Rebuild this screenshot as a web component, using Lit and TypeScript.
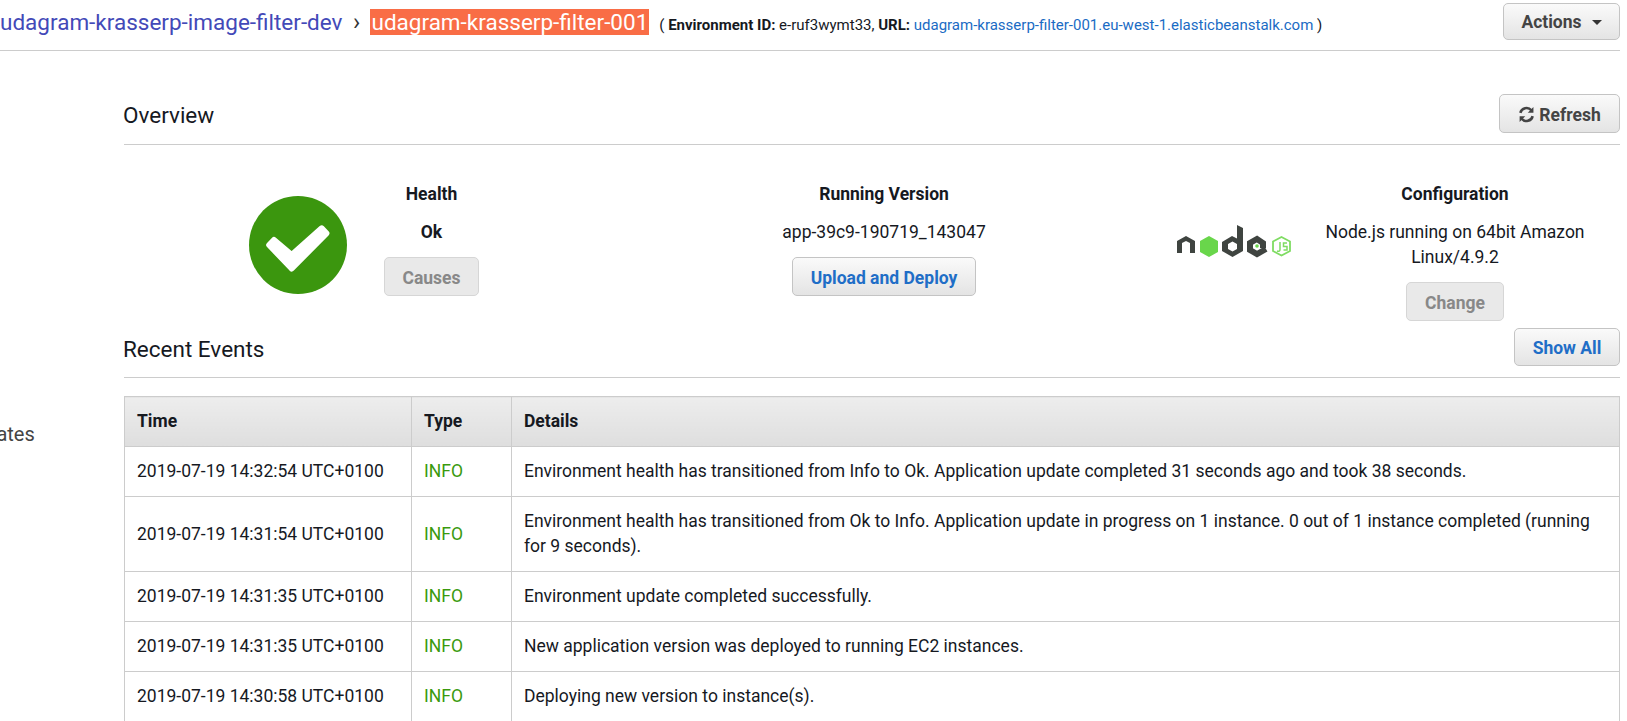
import { LitElement, html, css, svg } from "lit";
import { customElement } from "lit/decorators.js";

const rows = [
  ["2019-07-19 14:32:54 UTC+0100", "Environment health has transitioned from Info to Ok. Application update completed 31 seconds ago and took 38 seconds."],
  ["2019-07-19 14:31:54 UTC+0100", "Environment health has transitioned from Ok to Info. Application update in progress on 1 instance. 0 out of 1 instance completed (running for 9 seconds)."],
  ["2019-07-19 14:31:35 UTC+0100", "Environment update completed successfully."],
  ["2019-07-19 14:31:35 UTC+0100", "New application version was deployed to running EC2 instances."],
  ["2019-07-19 14:30:58 UTC+0100", "Deploying new version to instance(s)."],
];

@customElement("app-root")
export class AppRoot extends LitElement {
  static styles = css`
    :host { display: block; height: 721px; overflow: hidden; background: #fff; color: #16191f; font-family: Roboto, "Liberation Sans", sans-serif; font-size: 17.5px; }
    .top { display: flex; align-items: center; height: 50px; padding-bottom: 6px; box-sizing: border-box; margin-right: 7px; box-shadow: 0 1px 0 #ccc; }
    .crumb { font-size: 22.5px; color: #4349b8; line-height: 26px; }
    .sep { width: 28px; text-align: center; font-size: 24px; line-height: 26px; color: #333; }
    .sel { background: #f96d46; color: #fff; font-size: 22.5px; line-height: 26px; padding: 0 1px; }
    .meta { margin-left: 10px; margin-top: 6px; font-size: 15px; white-space: nowrap; }
    .meta a { color: #1a6bc4; }
    .meta b { font-weight: 700; }
    .spacer { flex: 1; }
    .btn { box-sizing: border-box; display: inline-flex; align-items: center; justify-content: center; gap: 4px; padding-top: 3px; border: 1px solid #c4c4c4; border-radius: 5px; background: linear-gradient(#fafafa, #e4e4e4); font-weight: 700; font-size: 17.5px; color: #444; }
    .btn.blue { color: #1f6ec7; }
    .btn.off { background: #e9e9e9; color: #888; border-color: #d6d6d6; }
    .actions { width: 117px; height: 37px; margin-bottom: 2px; flex: none; padding-top: 2px; }
    .caret { width: 0; height: 0; border: 5px solid transparent; border-top-color: #333; border-bottom: 0; margin-left: 6px; }
    .main { display: flex; padding-top: 1px; }
    .side { width: 124px; flex: none; padding-top: 370px; font-size: 20px; color: #444; line-height: 26px; box-sizing: border-box; overflow: hidden; }
    .side span { display: block; margin-left: -77px; white-space: nowrap; }
    .content { flex: 1; min-width: 0; padding-right: 7px; }
    .head { display: flex; align-items: center; justify-content: space-between; border-bottom: 1px solid #ccc; font-size: 22.5px; box-sizing: border-box; }
    .head > span:first-child { margin-left: -1px; }
    .ov { height: 56px; margin-top: 38px; padding-bottom: 4px; }
    .ev { height: 50px; padding-bottom: 7px; }
    .refresh { width: 121px; height: 39px; margin-bottom: 3px; }
    .showall { width: 106px; height: 38px; margin-bottom: 4px; padding-top: 1px; }
    .cards { display: grid; grid-template-columns: 561px 398px 1fr; height: 183px; box-sizing: border-box; padding-top: 39px; }
    .card { display: flex; justify-content: center; }
    .col { display: flex; flex-direction: column; align-items: center; text-align: center; line-height: 25px; }
    .col h4 { margin: 0 0 16px; font-size: 17.5px; font-weight: 700; line-height: 20px; }
    .col p { margin: 0 0 12px; }
    .col p.b { font-weight: 700; }
    .health { padding-left: 125px; justify-content: flex-start; }
    .health svg { margin-top: 12px; }
    .hcol { width: 169px; }
    .causes { width: 95px; height: 39px; }
    .upload { width: 184px; height: 39px; }
    .change { width: 98px; height: 39px; }
    .cfg { gap: 29px; justify-content: flex-start; padding-left: 94px; }
    .cfg svg { margin-top: 41px; flex: none; }
    .ccol { width: 268px; flex: none; }
    table { border-collapse: collapse; width: 100%; margin-top: 18px; table-layout: fixed; }
    th, td { border: 1px solid #ccc; padding: 0 12px; text-align: left; line-height: 25px; }
    th { height: 49px; font-weight: 700; background: linear-gradient(#ededed, #dedede); }
    td { height: 49px; }
    tr.tall td { height: 74px; }
    .info { color: #3a9a0e; }
  `;

  node() {
    return svg`<svg width="115" height="33" viewBox="0 0 115 33">
      <g fill="#3f4440">
        <path d="M0 16 L9 11 L18 16 V28 H13 V18 L9 16 L5 18 V28 H0Z"/>
        <path fill-rule="evenodd" d="M60 0 L66 3 V26 L55.5 32 L45 26 V17 L55 11 L60 13.5 Z M51 19 V24 L55.5 26.5 L60 24 V19 L55.5 16.5 Z"/>
      </g>
      <path d="M86 23 V18 L80 14 L73 18 V25 L80 29 L89 24" fill="none" stroke="#3f4440" stroke-width="6"/>
      <path d="M32 11 L41 16 V27 L32 32 L23 27 V16Z" fill="#69d64b"/>
      <circle cx="80" cy="21" r="1.8" fill="#69d64b"/>
      <path d="M104.500 12 L113 16.500 V26 L104.500 30.500 L96 26 V16.500Z" fill="none" stroke="#7fdc62" stroke-width="1.800"/>
      <path d="M103 17 V24.500 Q103 27 100 26 M110 18 H106.500 V21.500 H110 V25 H106.500" fill="none" stroke="#7fdc62" stroke-width="1.500"/>
    </svg>`;
  }

  render() {
    return html`
      <div class="top">
        <span class="crumb">udagram-krasserp-image-filter-dev</span>
        <span class="sep">›</span>
        <span class="sel">udagram-krasserp-filter-001</span>
        <span class="meta">( <b>Environment ID:</b> e-ruf3wymt33, <b>URL:</b> <a>udagram-krasserp-filter-001.eu-west-1.elasticbeanstalk.com</a> )</span>
        <span class="spacer"></span>
        <span class="btn actions">Actions <i class="caret"></i></span>
      </div>
      <div class="main">
        <div class="side"><span>Tag Updates</span></div>
        <div class="content">
          <div class="head ov">
            <span>Overview</span>
            <span class="btn refresh">
              <svg width="17" height="17" viewBox="0 0 16 16" fill="none" stroke="#444" stroke-width="2.4"><path d="M2.2 6.5A6 6 0 0 1 12.6 4"/><path d="M13.8 9.5A6 6 0 0 1 3.4 12"/><path d="M14.5 1v5.4H9.2z" fill="#444" stroke="none"/><path d="M1.5 15V9.6h5.3z" fill="#444" stroke="none"/></svg>
              Refresh
            </span>
          </div>
          <div class="cards">
            <div class="card health">
              <svg width="98" height="98" viewBox="0 0 98 98">
                <circle cx="49" cy="49" r="49" fill="#3b960e"/>
                <path d="M25 44 L42.700 59 L72.700 32.300 L77.400 37.300 L42.700 72.500 L20.200 49Z" fill="#fff" stroke="#fff" stroke-width="6" stroke-linejoin="round"/>
              </svg>
              <div class="col hcol">
                <h4>Health</h4>
                <p class="b">Ok</p>
                <span class="btn off causes">Causes</span>
              </div>
            </div>
            <div class="card">
              <div class="col">
                <h4>Running Version</h4>
                <p>app-39c9-190719_143047</p>
                <span class="btn blue upload">Upload and Deploy</span>
              </div>
            </div>
            <div class="card cfg">
              ${this.node()}
              <div class="col ccol">
                <h4>Configuration</h4>
                <p>Node.js running on 64bit Amazon Linux/4.9.2</p>
                <span class="btn off change">Change</span>
              </div>
            </div>
          </div>
          <div class="head ev">
            <span>Recent Events</span>
            <span class="btn blue showall">Show All</span>
          </div>
          <table>
            <colgroup><col style="width:287px"><col style="width:100px"><col></colgroup>
            <thead><tr><th>Time</th><th>Type</th><th>Details</th></tr></thead>
            <tbody>
              ${rows.map((r, i) => html`<tr class=${i === 1 ? "tall" : ""}><td>${r[0]}</td><td class="info">INFO</td><td>${r[1]}</td></tr>`)}
            </tbody>
          </table>
        </div>
      </div>
    `;
  }
}
